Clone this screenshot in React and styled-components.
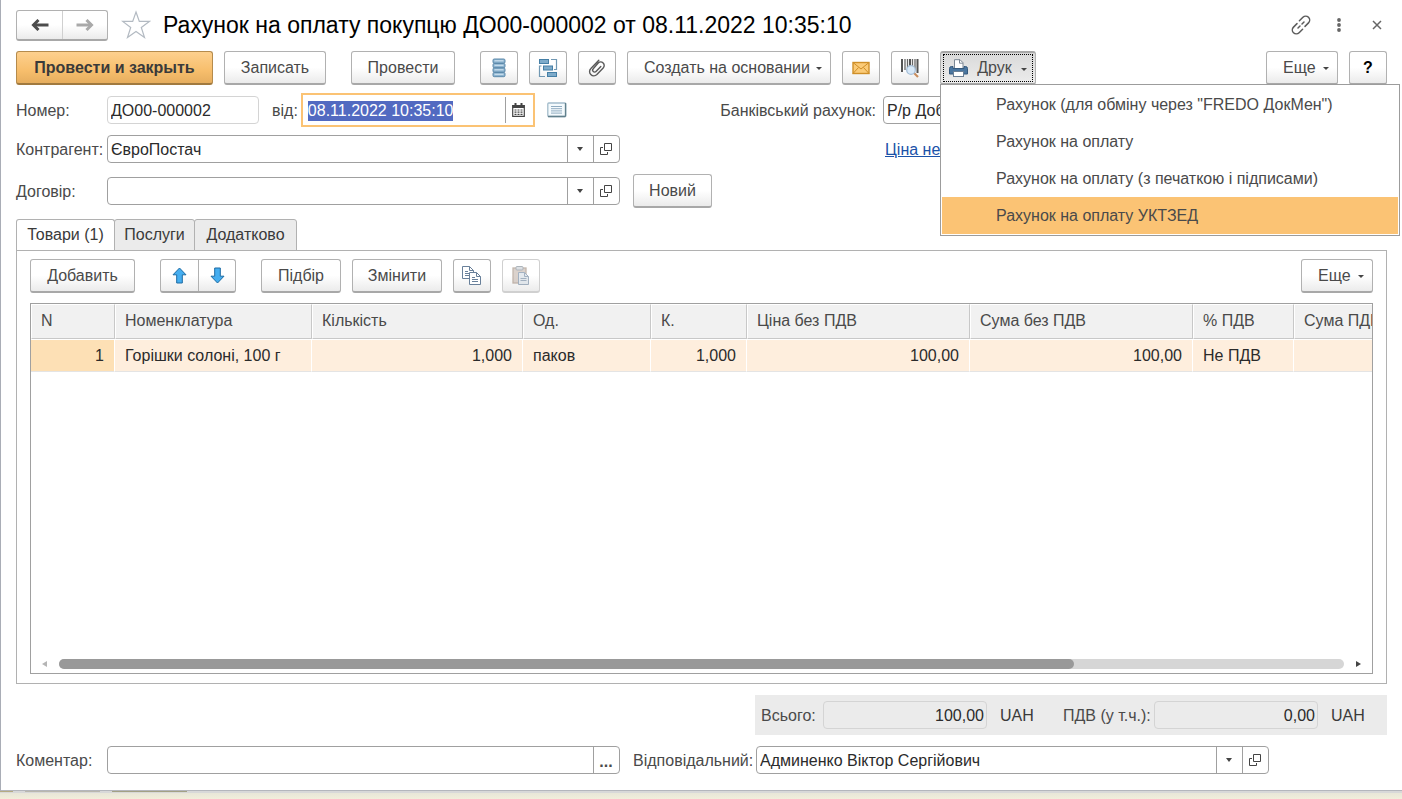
import React, { useEffect, useRef } from 'react';
import styled, { createGlobalStyle, css } from 'styled-components';

const COLUMNS = [
  { title: 'N', width: 84, value: '1', right: true },
  { title: 'Номенклатура', width: 197, value: 'Горішки солоні, 100 г' },
  { title: 'Кількість', width: 211, value: '1,000', right: true },
  { title: 'Од.', width: 128, value: 'паков' },
  { title: 'К.', width: 96, value: '1,000', right: true },
  { title: 'Ціна без ПДВ', width: 223, value: '100,00', right: true },
  { title: 'Сума без ПДВ', width: 223, value: '100,00', right: true },
  { title: '% ПДВ', width: 101, value: 'Не ПДВ' },
  { title: 'Сума ПДВ', width: 223, value: '', right: true },
];

const PRINT_FORMS = [
  'Рахунок (для обміну через "FREDO ДокМен")',
  'Рахунок на оплату',
  'Рахунок на оплату (з печаткою і підписами)',
  'Рахунок на оплату УКТЗЕД',
];

const TABS = [
  { title: 'Товари (1)', width: 99 },
  { title: 'Послуги', width: 81 },
  { title: 'Додатково', width: 103 },
];

const ArrowIcon = ({ forward }) => (
  <svg width="18" height="12" viewBox="0 0 18 12">
    <g
      fill="none"
      stroke="currentColor"
      strokeWidth="3"
      transform={forward ? 'matrix(-1 0 0 1 18 0)' : undefined}
    >
      <path d="M2.500 6H17.500" />
      <path d="M7.500 1L2.500 6l5 5" />
    </g>
  </svg>
);

const StarIcon = () => (
  <svg width="30" height="30" viewBox="0 0 30 30">
    <path
      d="M15 2l3.3 9.4h10l-8 6 3.2 10.1-8.5-6.1-8.5 6.1 3.2-10.1-8-6h10z"
      fill="none"
      stroke="#b3bac2"
      strokeWidth="1.2"
    />
  </svg>
);

const LinkIcon = () => (
  <svg width="20" height="20" viewBox="0 0 20 20">
    <g fill="none" stroke="#5c5c5c" strokeWidth="1.5" strokeLinecap="round">
      <path d="M8.4 5.8l3.5-3.5a3.9 3.9 0 0 1 5.6 5.6L14 11.400" />
      <path d="M11.600 14.200l-3.500 3.500a3.900 3.900 0 0 1-5.600-5.600L6 8.600" />
      <path d="M7 13l2-2M11 9l2-2" />
    </g>
  </svg>
);

const DotsIcon = () => (
  <svg width="6" height="16" viewBox="0 0 6 16" fill="#666">
    <circle cx="3" cy="3" r="1.9" />
    <circle cx="3" cy="8" r="1.9" />
    <circle cx="3" cy="13" r="1.9" />
  </svg>
);

const CloseIcon = () => (
  <svg width="20" height="20" viewBox="0 0 20 20">
    <path d="M6 6l8 8M14 6l-8 8" stroke="#666" strokeWidth="1.5" />
  </svg>
);

const RegisterIcon = () => (
  <svg width="14" height="20" viewBox="0 0 14 20">
    {[1, 5.5, 10, 14.5].map((y) => (
      <g key={y}>
        <rect x="1" y={y} width="12" height="4.2" rx="1.2" fill="#8db4d0" stroke="#5c89aa" />
        <path d="M2.5 1.8h9" transform={`translate(0 ${y})`} stroke="#d5e6f2" />
      </g>
    ))}
  </svg>
);

const StructureIcon = () => (
  <svg width="20" height="20" viewBox="0 0 20 20">
    <g fill="#7eabca" stroke="#457fa6">
      <rect x="1.5" y="1.5" width="9" height="4" />
      <rect x="5.5" y="8" width="9" height="4" />
      <rect x="9.5" y="14.5" width="9" height="4" />
    </g>
    <g fill="none" stroke="#7198b3" strokeWidth="1.2">
      <path d="M13 1.5h5.5v10H16" />
      <path d="M3.5 8h-2v10.5H7" />
    </g>
  </svg>
);

const ClipIcon = () => (
  <svg width="18" height="18" viewBox="0 0 18 18">
    <path
      d="M10.8 1.2L2.900 9.400a4.300 4.300 0 0 0 6 6.200l6.300-6.700a3.500 3.500 0 0 0-5-4.900L5.200 9.800a1.900 1.900 0 0 0 2.800 2.700l4.800-5.100"
      fill="none"
      stroke="#5a5a5a"
      strokeWidth="1.400"
      strokeLinecap="round"
    />
  </svg>
);

const MailIcon = () => (
  <svg width="18" height="14" viewBox="0 0 18 14">
    <rect x="1" y="1.5" width="16" height="11" fill="#fbcb78" stroke="#cf8f28" strokeWidth="1.4" />
    <path d="M1 1.5l8 6.5 8-6.5M1 12.5l5.500-6M17 12.500l-5.500-6" fill="none" stroke="#cf8f28" />
  </svg>
);

const BarcodeIcon = () => (
  <svg width="20" height="20" viewBox="0 0 20 20">
    <path d="M2 1v13M17.5 1v14" stroke="#555" strokeWidth="2" />
    <path d="M5 1v11M7.5 1v9M12.5 1v8M15 1v11" stroke="#666" strokeWidth="1.3" />
    <path d="M10 1v8" stroke="#555" strokeWidth="2" />
    <path d="M14 15l4 4" stroke="#c98c5c" strokeWidth="2.2" />
    <circle cx="11" cy="12" r="4.3" fill="#d8e9f8" stroke="#a6bfd8" strokeWidth="1.3" />
  </svg>
);

const PrinterIcon = () => (
  <svg width="19" height="18" viewBox="0 0 19 18">
    <path d="M5.500 9V.700h5.500L14 3.700V9" fill="#fff" stroke="#7b8794" />
    <path d="M10.500.700v3.500H14" fill="none" stroke="#7b8794" />
    <path d="M.5 9.500q0-2 2-2h1.500v2h11v-2h1.500q2 0 2 2V15H.5z" fill="#4a76a0" stroke="#35597d" />
    <rect x="4.500" y="12.500" width="10" height="5" fill="#fff" stroke="#6a7f95" />
  </svg>
);

const CalendarIcon = () => (
  <svg width="13" height="14" viewBox="0 0 13 14">
    <path d="M.7 2.5h11.600v10.800H.7z" fill="#fff" stroke="#444" strokeWidth="1.2" />
    <path d="M.5 2h12v3H.5z" fill="#444" />
    <path d="M3.5 0v3M9.500 0v3" stroke="#444" strokeWidth="2" />
    <path d="M2.5 7h8M2.500 9.200h8M2.500 11.400h8" stroke="#444" strokeWidth="1.2" strokeDasharray="2 1" />
  </svg>
);

const ListIcon = () => (
  <svg width="20" height="16" viewBox="0 0 20 16">
    <rect x=".8" y="1" width="18" height="13.5" rx="1" fill="#f4fafd" stroke="#a3bccb" strokeWidth="1.3" />
    <path d="M18.5 1v13.500M1 14.500h17.500" stroke="#61808c" strokeWidth="1.3" />
    <path d="M4 4.500h11M4 6.700h11M4 8.900h11M4 11.100h11" stroke="#8fabc0" />
  </svg>
);

const OpenIcon = () => (
  <svg width="12" height="12" viewBox="0 0 12 12" fill="none" stroke="#444">
    <path d="M4.500.5h7v7h-7z" />
    <path d="M3 4.500H.5v7h7V9" />
  </svg>
);

const MoveIcon = ({ down }) => (
  <svg width="15" height="17" viewBox="0 0 15 17">
    <path
      d="M7.500 1L14 7.800h-3.700V16H4.700V7.800H1z"
      transform={down ? 'matrix(1 0 0 -1 0 17)' : undefined}
      fill="#45aef0"
      stroke="#1c6ba3"
      strokeLinejoin="round"
    />
  </svg>
);

const Sheet = ({ x, y }) => (
  <g transform={`translate(${x} ${y})`} fill="#fff" stroke="#69809a">
    <path d="M.5.5h7l4 4v8H.5z" />
    <path d="M7.500.5v4h4M3 5.500h3M3 7.500h6M3 9.500h6" fill="none" />
  </g>
);

const CopyIcon = () => (
  <svg width="20" height="20" viewBox="0 0 20 20">
    <Sheet x={0} y={0} />
    <Sheet x={7} y={6} />
  </svg>
);

const PasteIcon = () => (
  <svg width="18" height="20" viewBox="0 0 18 20" opacity=".6">
    <rect x="1" y="2" width="13" height="15" fill="#c4b5ab" stroke="#9d8878" strokeWidth="1.3" />
    <rect x="4" y=".5" width="7" height="3.5" rx="1" fill="#c5ccd3" stroke="#78848f" />
    <path d="M6.500 6.500h6l4 4v8h-10z" fill="#d3dce4" stroke="#69809a" />
    <path d="M12.500 6.500v4h4M8.500 12.500h6M8.500 14.500h6" fill="none" stroke="#69809a" />
  </svg>
);

const Field = ({ id, label, labelWidth, value, choice, more }) => (
  <>
    <Label htmlFor={id} $width={labelWidth}>
      {label}
    </Label>
    <FieldBox>
      <Input id={id} defaultValue={value} />
      {choice && (
        <>
          <FieldButton aria-label="Вибрати">
            <Caret />
          </FieldButton>
          <FieldButton aria-label="Відкрити">
            <OpenIcon />
          </FieldButton>
        </>
      )}
      {more && <MoreButton>...</MoreButton>}
    </FieldBox>
  </>
);

const TitleBar = () => (
  <TitleRow>
    <ButtonPair>
      <NavButton aria-label="Назад">
        <ArrowIcon />
      </NavButton>
      <NavButton aria-label="Вперед" $muted>
        <ArrowIcon forward />
      </NavButton>
    </ButtonPair>
    <StarIcon />
    <Title>Рахунок на оплату покупцю ДО00-000002 от 08.11.2022 10:35:10</Title>
    <WindowTools>
      <PlainButton aria-label="Посилання">
        <LinkIcon />
      </PlainButton>
      <PlainButton aria-label="Меню">
        <DotsIcon />
      </PlainButton>
      <PlainButton aria-label="Закрити">
        <CloseIcon />
      </PlainButton>
    </WindowTools>
  </TitleRow>
);

const CommandBar = () => (
  <Bar>
    <Group>
      <PrimaryButton $width={197}>Провести и закрыть</PrimaryButton>
      <Button $width={102}>Записать</Button>
    </Group>
    <Button $width={104}>Провести</Button>
    <Group>
      <IconButton aria-label="Рухи документа">
        <RegisterIcon />
      </IconButton>
      <IconButton aria-label="Структура підпорядкованості">
        <StructureIcon />
      </IconButton>
      <IconButton aria-label="Файли">
        <ClipIcon />
      </IconButton>
      <DropButton $width={204}>
        Создать на основании
        <SmallCaret />
      </DropButton>
      <IconButton aria-label="Надіслати">
        <MailIcon />
      </IconButton>
      <IconButton aria-label="Штрихкод">
        <BarcodeIcon />
      </IconButton>
      <MenuAnchor>
        <PrintButton $width={96}>
          <PrinterIcon />
          Друк
          <SmallCaret />
        </PrintButton>
        <Menu>
          {PRINT_FORMS.map((form, i) => (
            <li key={form}>
              <MenuItem $active={i === 3}>{form}</MenuItem>
            </li>
          ))}
        </Menu>
      </MenuAnchor>
    </Group>
    <Group $end>
      <DropButton $width={72}>
        Еще
        <SmallCaret />
      </DropButton>
      <HelpButton>?</HelpButton>
    </Group>
  </Bar>
);

const Header = () => {
  const dateRef = useRef(null);

  useEffect(() => {
    dateRef.current.focus();
    dateRef.current.select();
  }, []);

  return (
    <Form>
      <FormRow>
        <Label htmlFor="number" $width={91}>
          Номер:
        </Label>
        <NumberBox>
          <Input id="number" defaultValue="ДО00-000002" />
        </NumberBox>
        <DateLabel htmlFor="date">від:</DateLabel>
        <DateBox>
          <Input id="date" ref={dateRef} defaultValue="08.11.2022 10:35:10" />
          <CalendarButton aria-label="Календар">
            <CalendarIcon />
          </CalendarButton>
        </DateBox>
        <ListButton aria-label="Список">
          <ListIcon />
        </ListButton>
        <AccountPart>
          <Label htmlFor="account">Банківський рахунок:</Label>
          <AccountBox>
            <Input id="account" defaultValue="Р/р Доб" />
          </AccountBox>
        </AccountPart>
      </FormRow>
      <FormRow>
        <Field id="partner" label="Контрагент:" labelWidth={91} value="ЄвроПостач" choice />
        <PriceLink href="#price">Ціна не</PriceLink>
      </FormRow>
      <ContractRow>
        <Field id="contract" label="Договір:" labelWidth={91} value="" choice />
        <NewButton $width={79}>Новий</NewButton>
      </ContractRow>
    </Form>
  );
};

const Goods = () => (
  <>
    <TabList role="tablist">
      {TABS.map((tab, i) => (
        <Tab
          key={tab.title}
          role="tab"
          aria-selected={i === 0}
          $active={i === 0}
          $width={tab.width}
        >
          {tab.title}
        </Tab>
      ))}
    </TabList>
    <Panel>
      <Bar>
        <Button $width={105}>Добавить</Button>
        <ButtonPair>
          <MoveButton aria-label="Вгору">
            <MoveIcon />
          </MoveButton>
          <MoveButton aria-label="Вниз">
            <MoveIcon down />
          </MoveButton>
        </ButtonPair>
        <Group>
          <Button $width={80}>Підбір</Button>
          <Button $width={90}>Змінити</Button>
          <IconButton aria-label="Копіювати">
            <CopyIcon />
          </IconButton>
          <IconButton aria-label="Вставити" disabled>
            <PasteIcon />
          </IconButton>
        </Group>
        <Group $end>
          <DropButton $width={72}>
            Еще
            <SmallCaret />
          </DropButton>
        </Group>
      </Bar>
      <Grid>
        <TableView>
          <Table>
            <colgroup>
              {COLUMNS.map((c) => (
                <col key={c.title} width={c.width} />
              ))}
            </colgroup>
            <thead>
              <tr>
                {COLUMNS.map((c) => (
                  <Th key={c.title}>{c.title}</Th>
                ))}
              </tr>
            </thead>
            <tbody>
              <tr>
                {COLUMNS.map((c, i) => (
                  <Td key={c.title} $right={c.right} $current={i === 0}>
                    {c.value}
                  </Td>
                ))}
              </tr>
            </tbody>
          </Table>
        </TableView>
        <ScrollBar>
          <ScrollArrow aria-label="Ліворуч" $left />
          <Track>
            <Thumb />
          </Track>
          <ScrollArrow aria-label="Праворуч" />
        </ScrollBar>
      </Grid>
    </Panel>
  </>
);

const Footer = () => (
  <>
    <Totals>
      <Label htmlFor="total" $width={56}>
        Всього:
      </Label>
      <TotalInput id="total" defaultValue="100,00" readOnly />
      <Currency>UAH</Currency>
      <Label htmlFor="vat" $width={85}>
        ПДВ (у т.ч.):
      </Label>
      <TotalInput id="vat" defaultValue="0,00" readOnly />
      <Currency>UAH</Currency>
    </Totals>
    <FooterRow>
      <Field id="comment" label="Коментар:" labelWidth={91} value="" more />
      <Spacer />
      <Field
        id="manager"
        label="Відповідальний:"
        labelWidth={123}
        value="Админенко Віктор Сергійович"
        choice
      />
    </FooterRow>
  </>
);

export default function App() {
  return (
    <>
      <GlobalStyle />
      <Page>
        <Window>
          <TitleBar />
          <CommandBar />
          <Header />
          <Goods />
          <Footer />
        </Window>
        <Backdrop>
          <Edge $width={13} $color="#b5ab82" />
          <Edge $width={75} $color="#b9b7ad" />
          <Edge $width={75} $color="#a3a184" />
        </Backdrop>
      </Page>
    </>
  );
}

const GlobalStyle = createGlobalStyle`
  * {
    box-sizing: border-box;
  }
  body {
    margin: 0;
    background: #fff;
    overflow-x: hidden;
  }
  body, button, input {
    font-family: 'Liberation Sans', Arial, sans-serif;
    font-size: 16px;
    line-height: 20px;
    color: #4a4a4a;
  }
  svg {
    display: block;
    flex-shrink: 0;
  }
`;

const Page = styled.div`
  display: flex;
  flex-direction: column;
  min-height: 100vh;
`;

const Window = styled.main`
  display: flex;
  flex-direction: column;
  flex: 1;
  padding: 10px 15px 16px;
  border-left: 1px solid #a9adb6;
  border-bottom: 1px solid #b4b6bc;
`;

const Backdrop = styled.div`
  display: flex;
  gap: 12px;
  height: 8px;
  background: linear-gradient(#d8d8d8 25%, #e8e6d8 25%, #f1eedb);
`;

const Edge = styled.div`
  width: ${({ $width }) => $width}px;
  height: 1px;
  background: ${({ $color }) => $color};
`;

const TitleRow = styled.header`
  display: flex;
  align-items: center;
  height: 30px;
  margin-bottom: 11px;
  > svg {
    margin: 0 12px 0 13px;
  }
`;

const Title = styled.h1`
  margin: 0;
  font-size: 23px;
  font-weight: 400;
  line-height: 30px;
  color: #000;
  white-space: nowrap;
`;

const WindowTools = styled.div`
  display: flex;
  align-items: center;
  gap: 25px;
  margin-left: auto;
`;

const PlainButton = styled.button`
  padding: 0;
  border: 0;
  background: none;
`;

const Bar = styled.div`
  display: flex;
  gap: 25px;
  height: 34px;
`;

const Group = styled.div`
  display: flex;
  gap: 11px;
  margin-left: ${({ $end }) => ($end ? 'auto' : '0')};
`;

const raised = css`
  border: 1px solid #b1b1b1;
  border-bottom: 2px solid #a8a8a8;
  border-radius: 3px;
  background: linear-gradient(#fff 50%, #ebebeb);
`;

const Button = styled.button`
  ${raised}
  display: flex;
  align-items: center;
  justify-content: center;
  width: ${({ $width = 38 }) => $width}px;
  height: 34px;
  padding: 0;
  white-space: nowrap;
`;

const PrimaryButton = styled(Button)`
  border-color: #b58b4c;
  border-bottom-color: #a17a3f;
  background: linear-gradient(#fdd08e, #f7be6c 60%, #e6ae5f);
  color: #3a3a3a;
  font-weight: 700;
`;

const DropButton = styled(Button)`
  justify-content: space-between;
  padding: 0 8px 0 16px;
`;

const IconButton = styled(Button)`
  &:disabled {
    border-color: #d0d0d0;
  }
`;

const HelpButton = styled(Button)`
  color: #000;
  font-weight: 700;
`;

const PrintButton = styled(Button)`
  justify-content: space-between;
  padding: 0 8px;
  background: linear-gradient(#d9d9d9, #ececec);
  border-top: 2px solid #a8a8a8;
  outline: 1px dotted #000;
  outline-offset: -4px;
`;

const Caret = styled.span`
  border: 3px solid transparent;
  border-top: 4px solid #444;
  border-bottom: 0;
`;

const SmallCaret = styled(Caret)`
  margin-top: 2px;
  border-top-width: 3px;
`;

const ButtonPair = styled.div`
  ${raised}
  display: flex;
`;

const NavButton = styled(PlainButton)`
  display: flex;
  align-items: center;
  justify-content: center;
  width: 45px;
  height: 28px;
  color: ${({ $muted }) => ($muted ? '#a9a9a9' : '#4c4c4c')};
  & + & {
    border-left: 1px solid #d0d0d0;
  }
`;

const MoveButton = styled(NavButton)`
  width: 37px;
  height: 31px;
  & + & {
    border-left-color: #b1b1b1;
  }
`;

const MenuAnchor = styled.div`
  position: relative;
`;

const Menu = styled.ul`
  position: absolute;
  z-index: 1;
  top: 33px;
  left: 0;
  width: 460px;
  margin: 0;
  padding: 1px;
  list-style: none;
  border: 1px solid #9c9c9c;
  background: #fff;
`;

const MenuItem = styled.button`
  display: block;
  width: 100%;
  height: 37px;
  padding: 0 54px;
  border: 0;
  background: ${({ $active }) => ($active ? '#fbc374' : 'none')};
  text-align: left;
  white-space: nowrap;
`;

const Form = styled.div`
  padding: 8px 0 11px;
`;

const FormRow = styled.div`
  display: flex;
  align-items: center;
  margin-bottom: 8px;
`;

const ContractRow = styled(FormRow)`
  margin: 11px 0 0;
`;

const Label = styled.label`
  width: ${({ $width }) => ($width ? `${$width}px` : 'auto')};
  flex-shrink: 0;
  padding-top: 2px;
  white-space: nowrap;
`;

const DateLabel = styled(Label)`
  margin: 0 3px 0 13px;
`;

const FieldBox = styled.div`
  display: flex;
  width: 513px;
  height: 28px;
  border: 1px solid #a0a0a0;
  border-radius: 4px;
  background: #fff;
`;

const NumberBox = styled(FieldBox)`
  width: 152px;
  border-color: #d4d4d4;
`;

const DateBox = styled(FieldBox)`
  width: 234px;
  height: 34px;
  padding: 2px 0 2px 2px;
  border: 2px solid #fbc374;
  border-radius: 0;
`;

const AccountPart = styled.div`
  display: flex;
  align-items: center;
  gap: 7px;
  margin-left: auto;
`;

const AccountBox = styled(FieldBox)`
  width: 504px;
`;

const Input = styled.input`
  flex: 1;
  min-width: 0;
  padding: 2px 3px 0;
  border: 0;
  outline: 0;
  background: none;
  color: #2b2b2b;
  &::selection {
    background: rgba(80, 104, 192, 0.99);
    color: #fff;
  }
`;

const FieldButton = styled.button`
  display: flex;
  align-items: center;
  justify-content: center;
  width: 26px;
  padding: 0 1px 0 0;
  border: 0;
  border-left: 1px solid #a0a0a0;
  background: none;
`;

const MoreButton = styled(FieldButton)`
  padding-top: 4px;
  font-weight: 700;
`;

const CalendarButton = styled(FieldButton)`
  width: 28px;
  padding-right: 2px;
`;

const ListButton = styled(PlainButton)`
  margin-left: 12px;
`;

const PriceLink = styled.a`
  width: 502px;
  margin-left: auto;
  padding-top: 2px;
  color: #1b52a8;
`;

const NewButton = styled(Button)`
  margin-left: 13px;
`;

const TabList = styled.div`
  display: flex;
  height: 32px;
  margin-bottom: -1px;
`;

const Tab = styled.button`
  width: ${({ $width }) => $width}px;
  padding: 0;
  border: 1px solid #b1b1b1;
  border-bottom-color: ${({ $active }) => ($active ? '#fff' : '#b1b1b1')};
  border-radius: 3px 3px 0 0;
  background: ${({ $active }) => ($active ? '#fff' : '#ebebeb')};
  color: #3a3a3a;
  & + & {
    margin-left: -1px;
  }
`;

const Panel = styled.section`
  display: flex;
  flex-direction: column;
  flex: 1;
  gap: 10px;
  padding: 8px 13px 9px;
  border: 1px solid #b1b1b1;
`;

const Grid = styled.div`
  display: flex;
  flex-direction: column;
  flex: 1;
  min-width: 0;
  border: 1px solid #a0a0a0;
`;

const TableView = styled.div`
  flex: 1;
  overflow: hidden;
`;

const Table = styled.table`
  width: 1486px;
  table-layout: fixed;
  border-collapse: separate;
  border-spacing: 0;
`;

const Th = styled.th`
  height: 35px;
  padding: 0 9px 2px;
  border: 1px solid #fff;
  border-right-color: #c8c8c8;
  border-bottom-color: #c8c8c8;
  background: #f1f1f1;
  font-weight: 400;
  text-align: left;
`;

const Td = styled.td`
  height: 33px;
  padding: 0 10px;
  border-top: 1px solid #fff;
  border-right: 1px solid #fff;
  border-bottom: 1px solid #e4e4e4;
  background: ${({ $current }) => ($current ? '#fde0b5' : '#feeedd')};
  color: #2b2b2b;
  text-align: ${({ $right }) => ($right ? 'right' : 'left')};
`;

const ScrollBar = styled.div`
  display: flex;
  align-items: center;
  gap: 12px;
  height: 18px;
  padding: 0 11px;
`;

const ScrollArrow = styled.button`
  padding: 0;
  border: 3px solid transparent;
  border-width: 3px 0 3px 5px;
  border-left-color: #444;
  background: none;
  ${({ $left }) =>
    $left &&
    css`
      border-width: 3px 5px 3px 0;
      border-right-color: #b5b5b5;
    `}
`;

const Track = styled.div`
  flex: 1;
  height: 10px;
  border-radius: 5px;
  background: #d6d6d6;
`;

const Thumb = styled.div`
  width: 79%;
  height: 10px;
  border-radius: 5px;
  background: #999;
`;

const Totals = styled.div`
  display: flex;
  align-items: center;
  align-self: flex-end;
  width: 632px;
  height: 40px;
  margin: 11px 0;
  padding-left: 6px;
  background: #ebebeb;
`;

const TotalInput = styled.input`
  width: 164px;
  height: 28px;
  margin: 0 13px 0 6px;
  padding: 2px 2px 0;
  border: 1px solid #d4d4d4;
  border-radius: 4px;
  background: none;
  color: #2b2b2b;
  text-align: right;
`;

const Currency = styled.span`
  width: 33px;
  margin-right: 30px;
  padding-top: 2px;
  color: #3a3a3a;
`;

const FooterRow = styled.div`
  display: flex;
  align-items: center;
`;

const Spacer = styled.div`
  width: 13px;
`;
